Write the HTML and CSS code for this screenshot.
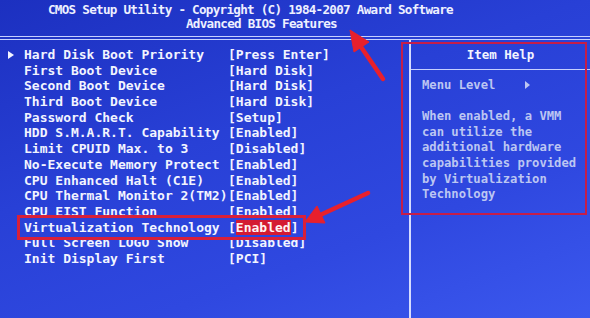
FILE: index.html
```html
<!DOCTYPE html>
<html lang="en">
<head>
<meta charset="utf-8">
<title>Advanced BIOS Features</title>
<link rel="stylesheet" href="styles.css">
</head>
<body>
<div class="screen">
  <header class="title">
    <div>CMOS Setup Utility - Copyright (C) 1984-2007 Award Software</div>
    <div class="sub">Advanced BIOS Features</div>
  </header>
  <div class="main">
    <section class="menu">
      <div class="row"><span class="ptr"></span><span>Hard Disk Boot Priority</span><span>[Press Enter]</span></div>
      <div class="row"><span></span><span>First Boot Device</span><span>[Hard Disk]</span></div>
      <div class="row"><span></span><span>Second Boot Device</span><span>[Hard Disk]</span></div>
      <div class="row"><span></span><span>Third Boot Device</span><span>[Hard Disk]</span></div>
      <div class="row"><span></span><span>Password Check</span><span>[Setup]</span></div>
      <div class="row"><span></span><span>HDD S.M.A.R.T. Capability</span><span>[Enabled]</span></div>
      <div class="row"><span></span><span>Limit CPUID Max. to 3</span><span>[Disabled]</span></div>
      <div class="row"><span></span><span>No-Execute Memory Protect</span><span>[Enabled]</span></div>
      <div class="row"><span></span><span>CPU Enhanced Halt (C1E)</span><span>[Enabled]</span></div>
      <div class="row"><span></span><span>CPU Thermal Monitor 2(TM2)</span><span>[Enabled]</span></div>
      <div class="row"><span></span><span>CPU EIST Function</span><span>[Enabled]</span></div>
      <div class="row hl"><span></span><span>Virtualization Technology</span><span>[<span class="cur">Enabled</span>]</span></div>
      <div class="row"><span></span><span>Full Screen LOGO Show</span><span>[Disabled]</span></div>
      <div class="row"><span></span><span>Init Display First</span><span>[PCI]</span></div>
    </section>
    <aside class="help">
      <div class="help-title">Item Help</div>
      <div class="help-body">
        <div class="lvl">Menu Level    <span class="tri"></span></div>
        <div class="blank"></div>
        <div>When enabled, a VMM</div>
        <div>can utilize the</div>
        <div>additional hardware</div>
        <div>capabilities provided</div>
        <div>by Virtualization</div>
        <div>Technology</div>
      </div>
    </aside>
  </div>
  <div class="mark-help"></div>
  <svg class="arrows" width="590" height="318" viewBox="0 0 590 318" aria-hidden="true">
    <g fill="#e8202c" stroke="#e8202c" stroke-linejoin="round">
      <line x1="383" y1="79" x2="359" y2="44" stroke-width="4.5" stroke-linecap="round"/>
      <polygon points="350,30 369,42 354,52"/>
      <line x1="368" y1="193" x2="318" y2="216" stroke-width="4.5" stroke-linecap="round"/>
      <polygon points="305,222 317,206 325,223"/>
    </g>
  </svg>
</div>
</body>
</html>
```
FILE: styles.css
```css
:root {
  --bg: linear-gradient(160deg, #1c30c0 0%, #2840d6 40%, #2f48e0 70%, #3b58ee 100%);
}
html, body {
  margin: 0;
  height: 100%;
}
body {
  background: var(--bg) fixed;
  font-family: "DejaVu Sans Mono", "Liberation Mono", monospace;
  overflow: hidden;
}
.screen {
  position: relative;
  width: 590px;
  height: 318px;
  display: flex;
  flex-direction: column;
  overflow: hidden;
}
.title {
  flex: none;
  height: 33px;
  padding: 3px 0 0 48px;
  border-bottom: 4px double #c6d0ff;
  font-size: 12.6px;
  letter-spacing: -0.72px;
  font-weight: bold;
  line-height: 13.5px;
  color: #eef0ff;
}
.title > div {
  white-space: pre;
}
.title .sub {
  margin-left: 138px;
}
.main {
  flex: 1;
  display: flex;
  min-height: 0;
}
.menu {
  width: 409px;
  flex: none;
  box-sizing: border-box;
  padding: 7px 0 0 8px;
  font-size: 13px;
  font-weight: bold;
  line-height: 15.7px;
  color: #f2f4ff;
}
.row {
  display: grid;
  grid-template-columns: 16px 204px auto;
  height: 15.7px;
}
.row > span {
  white-space: pre;
}
.ptr {
  width: 0;
  height: 0;
  margin-top: 4px;
  border-top: 4px solid transparent;
  border-bottom: 4px solid transparent;
  border-left: 6px solid #f2f4ff;
}
.row.hl {
  position: relative;
  z-index: 1;
  box-sizing: border-box;
  width: 289px;
  height: 25px;
  margin: -4.65px 0 -4.65px 9px;
  padding-top: 1.6px;
  grid-template-columns: 4px 204px auto;
  background: var(--bg) fixed;
  border: 3px solid #d8203a;
}
.cur {
  background: #d41a32;
  color: #fff4f4;
}
.help {
  flex: 1;
  display: flex;
  flex-direction: column;
  border-left: 2px solid #d6dcff;
}
.help-title {
  height: 29px;
  border-bottom: 1px solid #c6d0ff;
  text-align: center;
  font-size: 12.5px;
  font-weight: bold;
  line-height: 30px;
  color: #f2f4ff;
}
.help-body {
  padding: 8px 0 0 11px;
  font-size: 12.2px;
  font-weight: bold;
  line-height: 15.6px;
  color: #bcc6f2;
}
.help-body > div {
  white-space: pre;
  height: 15.6px;
}
.tri {
  display: inline-block;
  width: 0;
  height: 0;
  border-top: 4px solid transparent;
  border-bottom: 4px solid transparent;
  border-left: 5px solid #bcc6f2;
}
.mark-help {
  position: absolute;
  left: 401px;
  top: 42px;
  width: 186px;
  height: 173px;
  box-sizing: border-box;
  border: 2.5px solid #c41e4a;
  pointer-events: none;
}
.arrows {
  position: absolute;
  left: 0;
  top: 0;
  pointer-events: none;
  z-index: 2;
}
```
